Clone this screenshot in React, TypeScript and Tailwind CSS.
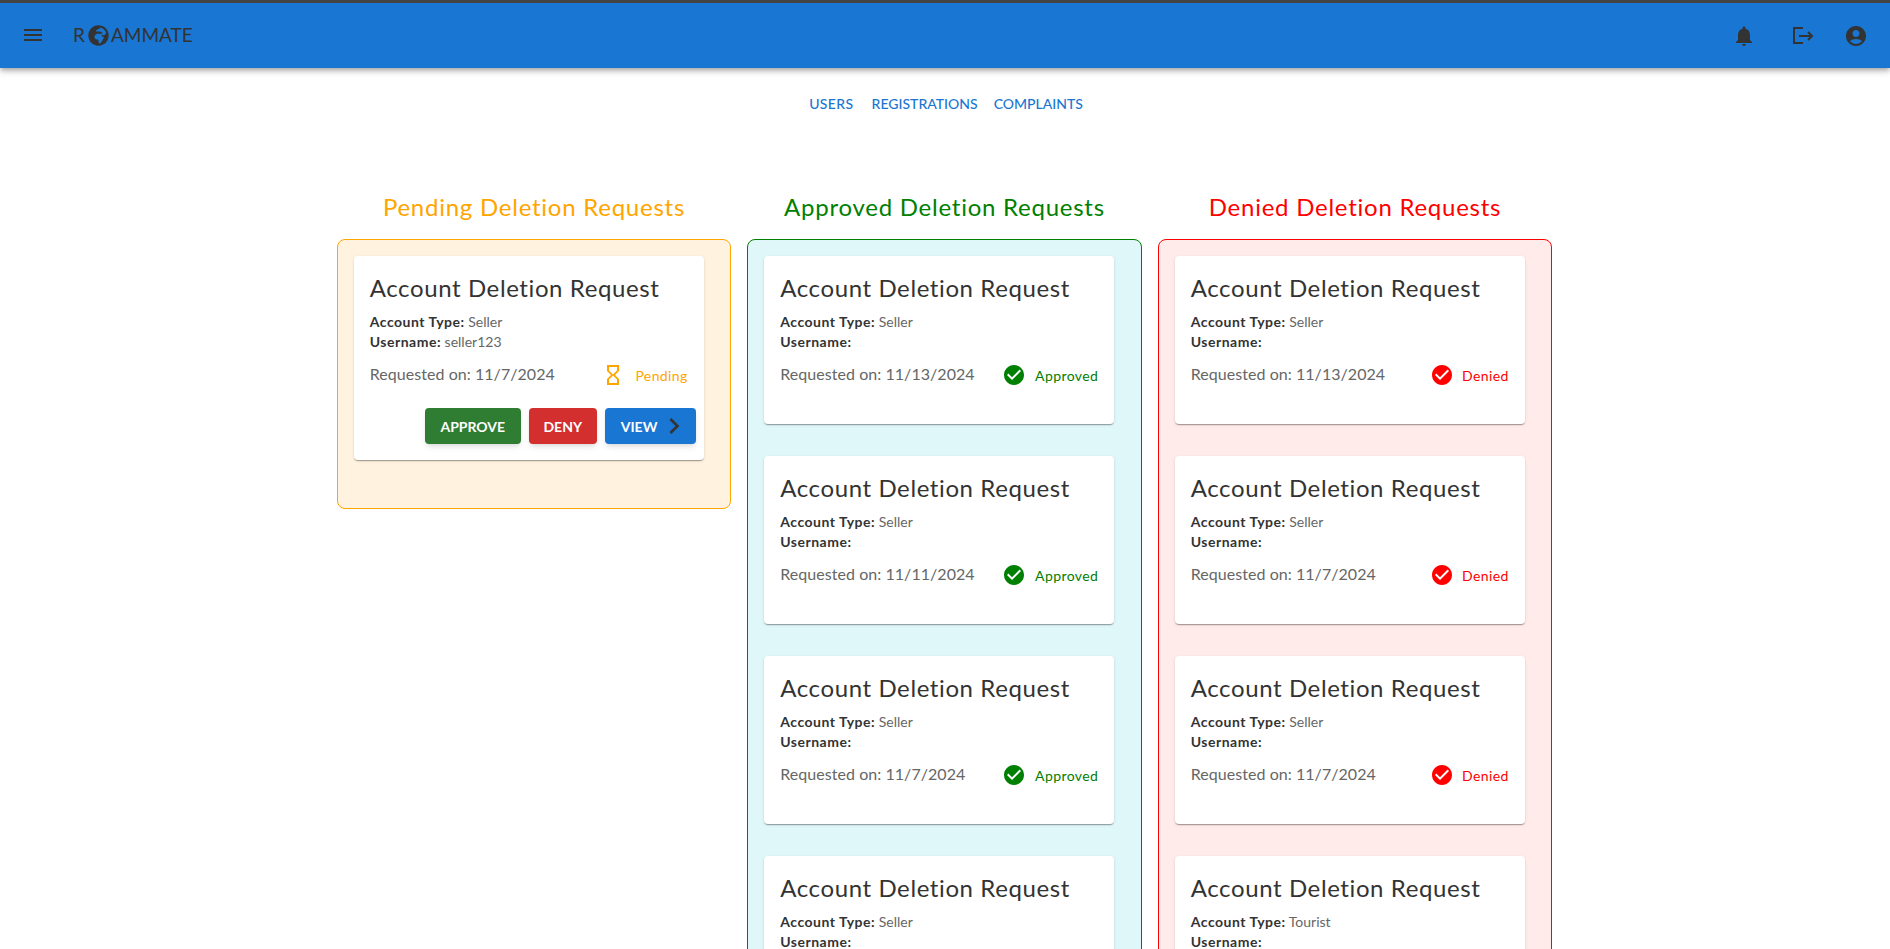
import React from "react";
import { MdMenu, MdNotifications, MdAccountCircle, MdHourglassEmpty, MdCheckCircle, MdChevronRight } from "react-icons/md";
import { FaGlobeAfrica } from "react-icons/fa";

type Kind = "pending" | "approved" | "denied";

function RequestCard({ kind, date, type = "Seller", username = "" }: { kind: Kind; date: string; type?: string; username?: string }) {
  return (
    <div className="w-[350px] shrink-0 bg-white rounded-[4px] shadow-[0_2px_1px_-1px_rgba(0,0,0,0.2),0_1px_1px_0_rgba(0,0,0,0.14),0_1px_3px_0_rgba(0,0,0,0.12)]">
      <div className="pl-4 pr-4 pt-4 pb-[30px]">
        <div className="text-[24px] leading-[32px] text-[#333333] tracking-[0.6px]">Account Deletion Request</div>
        <div className="mt-[8px] text-[14px] leading-[20px] text-[#666666]">
          <div><span className="font-bold text-[#333333] tracking-[0.5px]">Account Type:</span> {type}</div>
          <div><span className="font-bold text-[#333333] tracking-[0.5px]">Username:</span> {username}</div>
        </div>
        <div className="mt-[10px] h-[32px] flex items-start justify-between">
          <span className="text-[16px] leading-[24px] text-[#666666] tracking-[0.05px]">{date}</span>
          {kind === "pending" && (
            <span className="flex items-center text-[14px] text-[#ffa500] mt-[1px] tracking-[0.4px]">
              <MdHourglassEmpty className="w-[24px] h-[24px] mr-[10px]" />Pending
            </span>
          )}
          {kind === "approved" && (
            <span className="flex items-center text-[14px] text-[#008000] mt-[1px] tracking-[0.4px]">
              <MdCheckCircle className="w-[24px] h-[24px] mr-[9px]" />Approved
            </span>
          )}
          {kind === "denied" && (
            <span className="flex items-center text-[14px] text-[#ff0000] mt-[1px] tracking-[0.4px]">
              <MdCheckCircle className="w-[24px] h-[24px] mr-[8px]" />Denied
            </span>
          )}
        </div>
      </div>
      {kind === "pending" && (
        <div className="flex justify-end gap-2 pr-2 pb-4 -mt-[16px]">
          <button className="h-9 w-[96px] rounded-[4px] bg-[#2e7d32] text-white text-[14px] font-bold shadow-md">APPROVE</button>
          <button className="h-9 w-[68px] rounded-[4px] bg-[#d32f2f] text-white text-[14px] font-bold shadow-md">DENY</button>
          <button className="h-9 w-[91px] rounded-[4px] bg-[#1976d2] text-white text-[14px] font-bold shadow-md flex items-center pl-4">
            VIEW<MdChevronRight className="w-[32px] h-[32px] text-[#333333] ml-[1px]" />
          </button>
        </div>
      )}
    </div>
  );
}

function Column({ title, titleClass, panelClass, children }: { title: string; titleClass: string; panelClass: string; children: React.ReactNode }) {
  return (
    <div className="w-[394.5px] shrink-0">
      <div className={`h-[32px] text-center text-[24px] leading-[32px] tracking-[0.75px] ${titleClass}`}>{title}</div>
      <div className={`mt-[16px] border rounded-[8px] pl-4 pr-4 pt-4 pb-[48px] flex flex-col gap-8 ${panelClass}`}>{children}</div>
    </div>
  );
}

export default function App() {
  return (
    <div className="h-screen overflow-hidden bg-white font-['Lato','Noto_Sans',sans-serif]">
      <header className="h-[68px] border-t-[3px] border-[#444444] bg-[#1976d2] flex items-center pl-[21px] pr-[22px] text-[#333333] shadow-[0_2px_4px_-1px_rgba(0,0,0,0.2),0_4px_5px_0_rgba(0,0,0,0.14),0_1px_10px_0_rgba(0,0,0,0.12)] relative">
        <MdMenu className="w-6 h-6 -mt-[1px]" />
        <div className="ml-[28px] flex items-center text-[19px] -mt-[1px]">
          <span>R</span><FaGlobeAfrica className="w-[21px] h-[21px] ml-[3px] mr-[2px]" /><span>AMMATE</span>
        </div>
        <div className="ml-auto flex items-center">
          <MdNotifications className="w-6 h-6" />
          <svg viewBox="0 0 24 24" className="w-6 h-6 ml-[35px]" fill="none" stroke="currentColor" strokeWidth="2"><path d="M12 4H3v15h9M8 12h13M17 8l4 4-4 4" /></svg>
          <MdAccountCircle className="w-6 h-6 ml-[29px]" />
        </div>
      </header>
      <nav className="mt-[26px] pl-[2px] flex justify-center gap-[16px] text-[14px] leading-[20px] font-medium text-[#1976d2]">
        <span className="mr-[2px] tracking-[0.4px]">USERS</span><span>REGISTRATIONS</span><span>COMPLAINTS</span>
      </nav>
      <main className="mt-[77px] pr-[1px] flex justify-center gap-[16px] items-start">
        <Column title="Pending Deletion Requests" titleClass="text-[#ffa500]" panelClass="border-[#ffa500] bg-[#fff3e0]">
          <RequestCard kind="pending" date="Requested on: 11/7/2024" username="seller123" />
        </Column>
        <Column title="Approved Deletion Requests" titleClass="text-[#008000]" panelClass="border-[#008000] bg-[#e0f7fa]">
          <RequestCard kind="approved" date="Requested on: 11/13/2024" />
          <RequestCard kind="approved" date="Requested on: 11/11/2024" />
          <RequestCard kind="approved" date="Requested on: 11/7/2024" />
          <RequestCard kind="approved" date="Requested on: 11/7/2024" />
        </Column>
        <Column title="Denied Deletion Requests" titleClass="text-[#ff0000]" panelClass="border-[#ff0000] bg-[#ffebe9]">
          <RequestCard kind="denied" date="Requested on: 11/13/2024" />
          <RequestCard kind="denied" date="Requested on: 11/7/2024" />
          <RequestCard kind="denied" date="Requested on: 11/7/2024" />
          <RequestCard kind="denied" date="Requested on: 11/7/2024" type="Tourist" />
        </Column>
      </main>
    </div>
  );
}
